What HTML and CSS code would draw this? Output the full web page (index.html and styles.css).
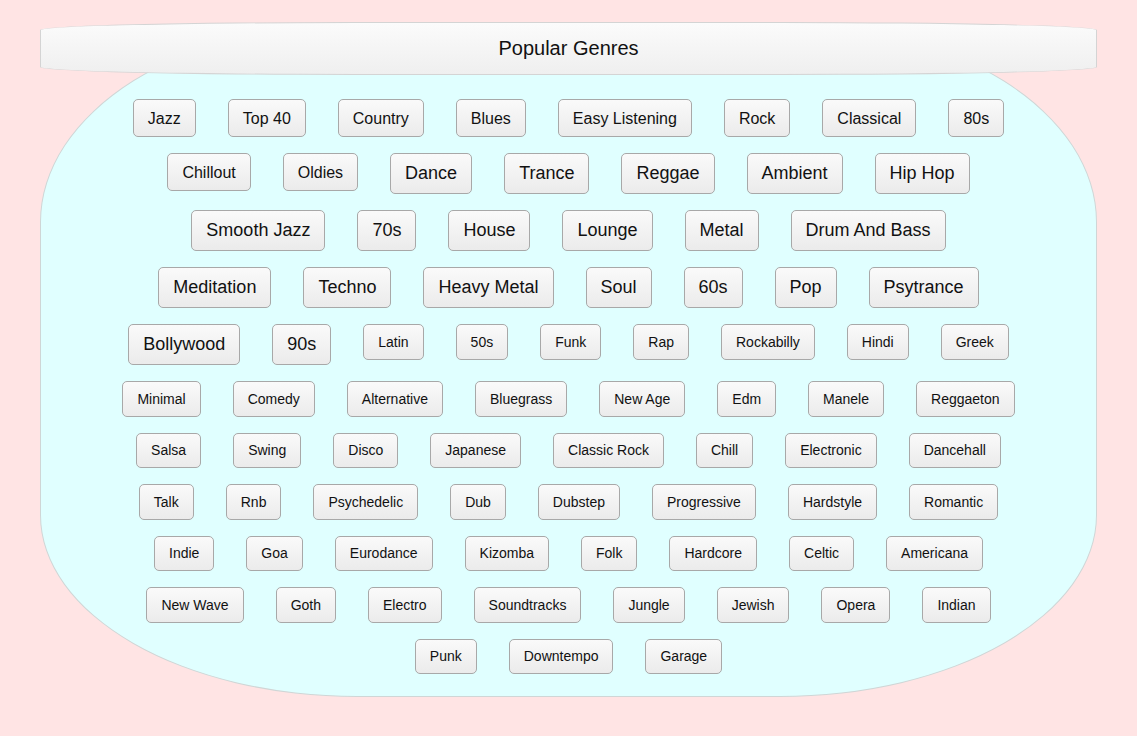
FILE: index.html
```html
<!DOCTYPE html>
<html lang="en">
<head>
<meta charset="utf-8">
<title>Popular Genres</title>
<link rel="stylesheet" href="styles.css">
</head>
<body>
<div class="jar">
  <div class="genres">
    <button class="tag md">Jazz</button>
    <button class="tag md">Top 40</button>
    <button class="tag md">Country</button>
    <button class="tag md">Blues</button>
    <button class="tag md">Easy Listening</button>
    <button class="tag md">Rock</button>
    <button class="tag md">Classical</button>
    <button class="tag md">80s</button>
    <button class="tag md">Chillout</button>
    <button class="tag md">Oldies</button>
    <button class="tag lg">Dance</button>
    <button class="tag lg">Trance</button>
    <button class="tag lg">Reggae</button>
    <button class="tag lg">Ambient</button>
    <button class="tag lg">Hip Hop</button>
    <button class="tag lg">Smooth Jazz</button>
    <button class="tag lg">70s</button>
    <button class="tag lg">House</button>
    <button class="tag lg">Lounge</button>
    <button class="tag lg">Metal</button>
    <button class="tag lg">Drum And Bass</button>
    <button class="tag lg">Meditation</button>
    <button class="tag lg">Techno</button>
    <button class="tag lg">Heavy Metal</button>
    <button class="tag lg">Soul</button>
    <button class="tag lg">60s</button>
    <button class="tag lg">Pop</button>
    <button class="tag lg">Psytrance</button>
    <button class="tag lg">Bollywood</button>
    <button class="tag lg">90s</button>
    <button class="tag">Latin</button>
    <button class="tag">50s</button>
    <button class="tag">Funk</button>
    <button class="tag">Rap</button>
    <button class="tag">Rockabilly</button>
    <button class="tag">Hindi</button>
    <button class="tag">Greek</button>
    <button class="tag">Minimal</button>
    <button class="tag">Comedy</button>
    <button class="tag">Alternative</button>
    <button class="tag">Bluegrass</button>
    <button class="tag">New Age</button>
    <button class="tag">Edm</button>
    <button class="tag">Manele</button>
    <button class="tag">Reggaeton</button>
    <button class="tag">Salsa</button>
    <button class="tag">Swing</button>
    <button class="tag">Disco</button>
    <button class="tag">Japanese</button>
    <button class="tag">Classic Rock</button>
    <button class="tag">Chill</button>
    <button class="tag">Electronic</button>
    <button class="tag">Dancehall</button>
    <button class="tag">Talk</button>
    <button class="tag">Rnb</button>
    <button class="tag">Psychedelic</button>
    <button class="tag">Dub</button>
    <button class="tag">Dubstep</button>
    <button class="tag">Progressive</button>
    <button class="tag">Hardstyle</button>
    <button class="tag">Romantic</button>
    <button class="tag">Indie</button>
    <button class="tag">Goa</button>
    <button class="tag">Eurodance</button>
    <button class="tag">Kizomba</button>
    <button class="tag">Folk</button>
    <button class="tag">Hardcore</button>
    <button class="tag">Celtic</button>
    <button class="tag">Americana</button>
    <button class="tag">New Wave</button>
    <button class="tag">Goth</button>
    <button class="tag">Electro</button>
    <button class="tag">Soundtracks</button>
    <button class="tag">Jungle</button>
    <button class="tag">Jewish</button>
    <button class="tag">Opera</button>
    <button class="tag">Indian</button>
    <button class="tag">Punk</button>
    <button class="tag">Downtempo</button>
    <button class="tag">Garage</button>
  </div>
  <h1 class="title">Popular Genres</h1>
</div>
</body>
</html>
```
FILE: styles.css
```css
html, body {
  margin: 0;
  padding: 0;
}

body {
  background: #ffe4e4;
  font-family: "Liberation Sans", Arial, sans-serif;
  color: #111;
  padding: 22px 40px 38px;
}

.jar {
  display: grid;
}

.genres,
.title {
  grid-area: 1 / 1;
}

.genres {
  background: #e0ffff;
  border: 1px solid #cfd6d6;
  border-radius: 317px 317px 317px 317px / 200px 200px 182px 182px;
  padding: 76px 79px 22px;
  display: flex;
  flex-wrap: wrap;
  justify-content: center;
  align-items: flex-start;
  align-content: flex-start;
  gap: 16px 32px;
  width: 897px;
  box-sizing: content-box;
}

.title {
  align-self: start;
  margin: 0;
  height: 51px;
  line-height: 51px;
  text-align: center;
  font-size: 20px;
  font-weight: normal;
  color: #111;
  background: linear-gradient(#fbfbfb, #efefef);
  border: 1px solid #d4d4d4;
  border-radius: 30% / 8px;
}

.tag {
  font-family: "Liberation Sans", Arial, sans-serif;
  font-size: 14px;
  line-height: 15.6px;
  color: #111;
  padding: 9.6px 14px 8.4px;
  margin: 0;
  border: 1px solid #a8a8a8;
  border-radius: 5px;
  background: linear-gradient(#fafafa, #ebebeb);
}

.tag.md {
  font-size: 16px;
  line-height: 18px;
  padding: 10px 14px 8px;
}

.tag.lg {
  font-size: 18px;
  line-height: 21px;
  padding: 9px 14px;
}
```
